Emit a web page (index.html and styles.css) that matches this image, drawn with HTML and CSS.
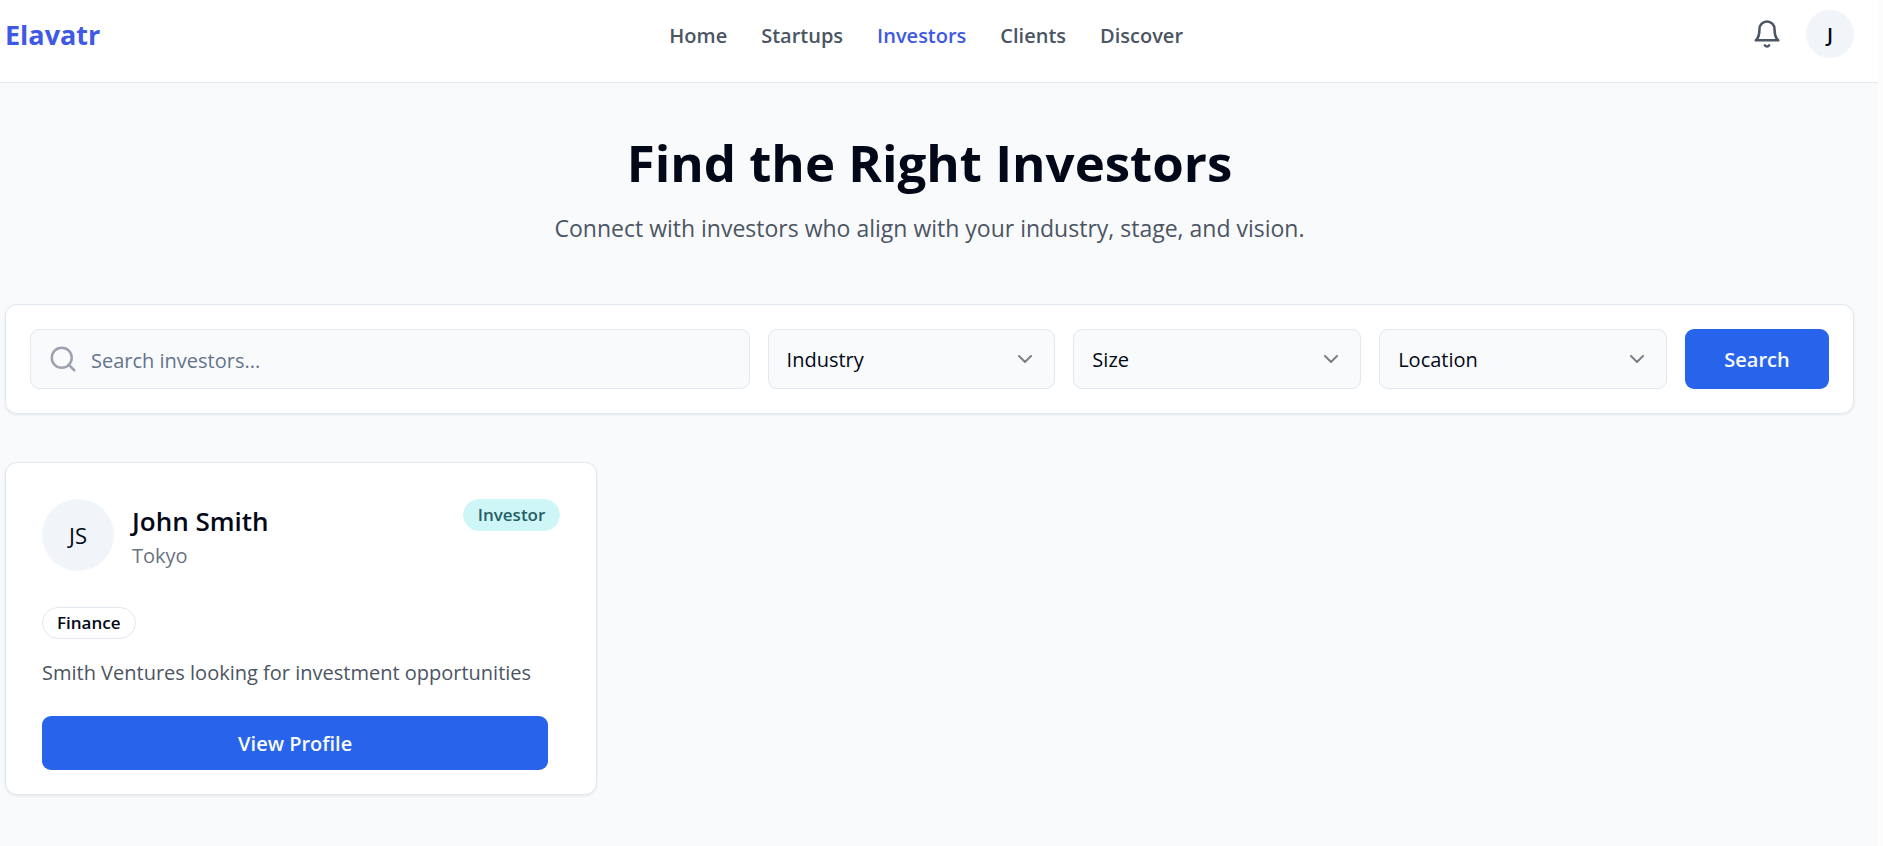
FILE: index.html
```html
<!DOCTYPE html>
<html lang="en">

<head>
    <meta charset="UTF-8">
    <meta name="viewport" content="width=device-width, initial-scale=1.0">
    <title>Elavatr - Investors</title>
    <link rel="stylesheet" href="styles.css">
</head>

<body>
    <header class="header">
        <a href="#" class="logo">Elavatr</a>
        <nav class="nav">
            <a href="#">Home</a>
            <a href="#">Startups</a>
            <a href="#" class="active">Investors</a>
            <a href="#">Clients</a>
            <a href="#">Discover</a>
        </nav>
        <div class="header-actions">
            <button class="icon-button" aria-label="Notifications">
                <svg class="icon" viewBox="0 0 24 24">
                    <path d="M6 8a6 6 0 0 1 12 0c0 7 3 9 3 9H3s3-2 3-9" />
                    <path d="M10.3 21a1.94 1.94 0 0 0 3.4 0" />
                </svg>
            </button>
            <button class="avatar avatar-small">J</button>
        </div>
    </header>

    <main class="container">
        <div class="intro">
            <h1>Find the Right Investors</h1>
            <p>Connect with investors who align with your industry, stage, and vision.</p>
        </div>

        <form class="search-bar">
            <div class="search-field">
                <svg class="icon search-icon" viewBox="0 0 24 24">
                    <circle cx="11" cy="11" r="8" />
                    <path d="m21 21-4.3-4.3" />
                </svg>
                <input type="text" aria-label="Search investors" placeholder="Search investors...">
            </div>
            <div class="filter">
                <select aria-label="Industry">
                    <option>Industry</option>
                </select>
                <svg class="icon chevron" viewBox="0 0 24 24">
                    <path d="m6 9 6 6 6-6" />
                </svg>
            </div>
            <div class="filter">
                <select aria-label="Size">
                    <option>Size</option>
                </select>
                <svg class="icon chevron" viewBox="0 0 24 24">
                    <path d="m6 9 6 6 6-6" />
                </svg>
            </div>
            <div class="filter">
                <select aria-label="Location">
                    <option>Location</option>
                </select>
                <svg class="icon chevron" viewBox="0 0 24 24">
                    <path d="m6 9 6 6 6-6" />
                </svg>
            </div>
            <button type="button" class="btn search-btn">Search</button>
        </form>

        <div class="investor-grid">
            <div class="card">
                <div class="card-header">
                    <div class="avatar">JS</div>
                    <div class="card-title">
                        <h2>John Smith</h2>
                        <p>Tokyo</p>
                    </div>
                    <span class="badge badge-investor">Investor</span>
                </div>
                <span class="badge">Finance</span>
                <p class="description">Smith Ventures looking for investment opportunities</p>
                <button class="btn profile-btn">View Profile</button>
            </div>
        </div>
    </main>
</body>

</html>
```
FILE: styles.css
```css
* {
    box-sizing: border-box;
}

body {
    margin: 0;
    min-height: 100vh;
    border-right: 5px solid #fcfcfc;
    background-color: #f9fafc;
    color: #020817;
    font-family: "Segoe UI", "Open Sans", "Noto Sans", sans-serif;
    font-size: 20px;
    line-height: 30px;
}

h1,
h2,
p {
    margin: 0;
}

button,
input,
select {
    font: inherit;
    color: inherit;
}

button {
    border: none;
    cursor: pointer;
}

.icon {
    width: 30px;
    height: 30px;
    fill: none;
    stroke: currentColor;
    stroke-width: 2;
    stroke-linecap: round;
    stroke-linejoin: round;
}

/* Header */
.header {
    display: flex;
    justify-content: space-between;
    padding: 10px 24px 24px 5px;
    background-color: white;
    border-bottom: 1px solid #e5e7eb;
}

.logo {
    padding-top: 4px;
    color: #4059e4;
    font-size: 27px;
    font-weight: 700;
    line-height: 42px;
    text-decoration: none;
}

.nav {
    display: flex;
    align-items: center;
    gap: 34px;
    padding-top: 3px;
}

.nav a {
    color: #4b5563;
    font-weight: 600;
    text-decoration: none;
}

.nav .active {
    color: #4059e4;
}

.header-actions {
    display: flex;
    justify-content: flex-end;
    gap: 24px;
}

.icon-button {
    display: flex;
    align-items: center;
    padding: 0;
    background: none;
    color: #4b5563;
}

.avatar {
    display: flex;
    align-items: center;
    justify-content: center;
    width: 72px;
    height: 72px;
    border-radius: 50%;
    background-color: #f1f5f9;
    font-size: 22px;
}

.avatar-small {
    width: 48px;
    height: 48px;
    padding: 2px 0 0;
    font-size: 20px;
    font-weight: 600;
}

/* Page content */
.container {
    padding: 48px 24px 48px 5px;
}

.intro {
    margin-bottom: 60px;
    text-align: center;
}

.intro h1 {
    font-size: 51px;
    font-weight: 700;
    line-height: 63px;
}

.intro p {
    margin-top: 18px;
    color: #4b5563;
    font-size: 23px;
    line-height: 32px;
}

.search-bar {
    display: flex;
    gap: 18px;
    margin-bottom: 48px;
    padding: 24px;
    background-color: white;
    border: 1px solid #e2e8f0;
    border-radius: 12px;
    box-shadow: 0 1px 3px rgba(0, 0, 0, 0.08);
}

.search-field {
    position: relative;
    flex: 5;
}

.search-field input,
.filter select {
    width: 100%;
    height: 60px;
    border: 1px solid #e2e8f0;
    border-radius: 9px;
    background-color: #f9fafc;
}

.search-field input {
    padding: 2px 18px 0 60px;
}

.search-field input::placeholder {
    color: #64748b;
}

.search-icon {
    position: absolute;
    top: 15px;
    left: 18px;
    color: #9ca3af;
}

.filter {
    position: relative;
    flex: 2;
}

.filter select {
    padding: 2px 18px 0;
    appearance: none;
}

.chevron {
    position: absolute;
    top: 18px;
    right: 18px;
    width: 24px;
    height: 24px;
    opacity: 0.5;
    pointer-events: none;
}

.btn {
    padding: 2px 0 0;
    border-radius: 9px;
    background-color: #2864eb;
    color: #f8fafc;
    font-weight: 600;
}

.search-btn {
    width: 144px;
}

/* Investor cards */
.investor-grid {
    display: grid;
    grid-template-columns: repeat(3, 1fr);
    gap: 36px;
}

.card {
    padding: 36px 36px 24px;
    background-color: white;
    border: 1px solid #e2e8f0;
    border-radius: 12px;
    box-shadow: 0 1px 3px rgba(0, 0, 0, 0.08);
}

.card-header {
    display: flex;
    align-items: flex-start;
    gap: 18px;
    margin-bottom: 36px;
}

.card-title {
    flex: 1;
    padding-top: 2px;
}

.card-title h2 {
    font-size: 26px;
    font-weight: 600;
    line-height: 40px;
}

.card-title p {
    color: #6b7280;
}

.badge {
    display: inline-block;
    padding: 0 14px;
    border: 1px solid #e2e8f0;
    border-radius: 16px;
    font-size: 17px;
    font-weight: 600;
    line-height: 30px;
}

.badge-investor {
    border-color: #cff6f7;
    background-color: #cff6f7;
    color: #245f66;
}

.description {
    margin: 19px 0 28px;
    color: #4b5563;
}

.profile-btn {
    width: calc(100% - 12px);
    height: 54px;
}
```
